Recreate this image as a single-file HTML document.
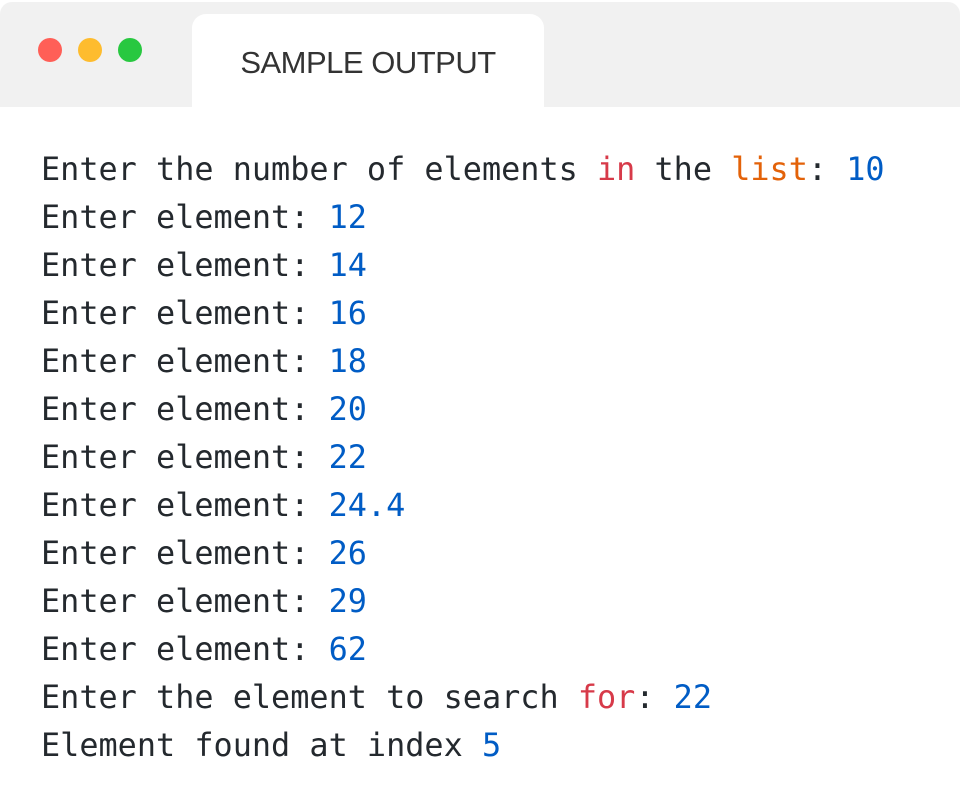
<!DOCTYPE html>
<html><head><style>
body{margin:0;background:#fff;width:960px;height:810px;overflow:hidden;position:relative}
.bar{position:absolute;left:0;top:2px;width:960px;height:105px;background:#f1f1f1;border-radius:12px 12px 0 0}
.dot{position:absolute;top:38px;width:24px;height:24px;border-radius:50%}
.tab{position:absolute;left:192px;top:14px;width:352px;height:93px;background:#fff;border-radius:14px 14px 0 0;
font-family:"Liberation Sans",sans-serif;font-size:31px;color:#333;text-align:center;line-height:98px;letter-spacing:-0.5px}
pre{position:absolute;left:41px;top:145px;margin:0;font-family:"DejaVu Sans Mono","Liberation Mono",monospace;font-size:31.85px;line-height:48px;color:#24292e}
.n{color:#005cc5}.k{color:#d73a49}.o{color:#e36209}
</style></head><body>
<div class="bar"></div>
<div class="dot" style="left:38px;background:#ff5f57"></div>
<div class="dot" style="left:78px;background:#febc2e"></div>
<div class="dot" style="left:118px;background:#28c840"></div>
<div class="tab">SAMPLE OUTPUT</div>
<pre>Enter the number of elements <span class="k">in</span> the <span class="o">list</span>: <span class="n">10</span>
Enter element: <span class="n">12</span>
Enter element: <span class="n">14</span>
Enter element: <span class="n">16</span>
Enter element: <span class="n">18</span>
Enter element: <span class="n">20</span>
Enter element: <span class="n">22</span>
Enter element: <span class="n">24.4</span>
Enter element: <span class="n">26</span>
Enter element: <span class="n">29</span>
Enter element: <span class="n">62</span>
Enter the element to search <span class="k">for</span>: <span class="n">22</span>
Element found at index <span class="n">5</span></pre>
</body></html>
